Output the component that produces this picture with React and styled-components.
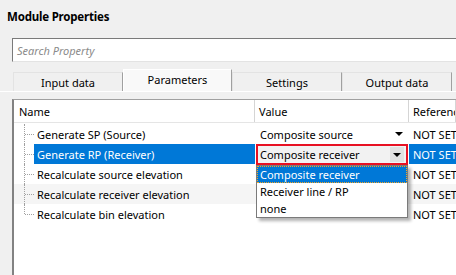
import React from 'react';
import styled, { createGlobalStyle } from 'styled-components';

const Global = createGlobalStyle`
  html, body { margin: 0; padding: 0; background: #f0f0f0; }
  body { font-family: "Noto Sans", "Liberation Sans", sans-serif; font-size: 11px; color: #000; }
`;

const Page = styled.div`
  width: 456px;
  height: 275px;
  overflow: hidden;
  background: #f0f0f0;
`;

const Title = styled.div`
  font-weight: bold;
  font-size: 11.5px;
  line-height: 16px;
  padding: 9px 0 0 7px;
  letter-spacing: -0.2px;
`;

const Search = styled.div`
  margin: 13px 0 0 12px;
  height: 22px;
  background: #fff;
  border-top: 1px solid #7a7a7a;
  border-left: 1px solid #7a7a7a;
  border-bottom: 1px solid #e3e3e3;
  display: flex;
  align-items: center;
  padding-left: 4px;
  color: #8a8a8a;
  font-style: italic;
`;

const TabBar = styled.div`
  display: flex;
  align-items: flex-end;
  margin: 7px 0 0 13px;
  height: 22px;
`;

const Tab = styled.div`
  width: ${p => (p.$active ? 109 : 110)}px;
  height: ${p => (p.$active ? 22 : 19)}px;
  box-sizing: border-box;
  display: flex;
  align-items: center;
  justify-content: center;
  background: ${p => (p.$active ? '#f9f9f9' : '#f0f0f0')};
  border-top: 1px solid ${p => (p.$active ? '#fff' : '#e3e3e3')};
  border-left: 1px solid ${p => (p.$active ? '#fff' : '#e3e3e3')};
  border-right: 1px solid #a0a0a0;
  padding-bottom: ${p => (p.$active ? 3 : 0)}px;
`;

const Pane = styled.div`
  border-top: 1px solid #fff;
  padding: 7px 0 0 12px;
`;

const Table = styled.div`
  position: relative;
  background: #fff;
  border-top: 1px solid #a0a0a0;
  border-left: 2px solid #828282;
  height: 200px;
`;

const Row = styled.div`
  display: grid;
  grid-template-columns: 241px 154px 1fr;
  height: ${p => (p.$header ? 23 : 20)}px;
  background: ${p => (p.$alt ? '#f5f5f5' : 'transparent')};
  ${p => p.$header && 'border-bottom: 1px solid #e5e5e5; box-sizing: border-box; margin-bottom: 1px;'}
`;

const HeadCell = styled.div`
  display: flex;
  align-items: center;
  padding-left: ${p => p.$pad || 4}px;
  border-right: 1px solid #d5d5d5;
  white-space: nowrap;
  overflow: hidden;
`;

const NameCell = styled.div`
  display: flex;
  height: 20px;
  white-space: nowrap;
  overflow: hidden;
`;

const Guide = styled.div`
  position: relative;
  width: 20px;
  flex: none;
  &::before {
    content: '';
    position: absolute;
    left: 10px;
    top: 0;
    height: ${p => (p.$last ? 10 : 20)}px;
    border-left: 1px dotted #a0a0a0;
  }
  &::after {
    content: '';
    position: absolute;
    left: 11px;
    top: 10px;
    width: 9px;
    border-top: 1px dotted #a0a0a0;
  }
`;

const Label = styled.div`
  flex: 1;
  display: flex;
  align-items: center;
  padding-left: 3px;
  background: ${p => (p.$sel ? '#0078d7' : 'transparent')};
  color: ${p => (p.$sel ? '#fff' : '#000')};
`;

const ValueCell = styled.div`
  position: relative;
  display: flex;
  align-items: center;
  padding: 0 6px 0 5px;
  justify-content: space-between;
`;

const RefCell = styled.div`
  display: flex;
  align-items: center;
  padding-left: 4px;
  white-space: nowrap;
  overflow: hidden;
  background: ${p => (p.$sel ? '#0078d7' : 'transparent')};
  color: ${p => (p.$sel ? '#fff' : '#000')};
`;

const Arrow = styled.span`
  width: 0;
  height: 0;
  border-left: 4px solid transparent;
  border-right: 4px solid transparent;
  border-top: 4px solid #000;
`;

const Combo = styled.div`
  position: absolute;
  left: 1px;
  top: 0;
  width: 152px;
  height: 21px;
  box-sizing: border-box;
  border: 2px solid #e81123;
  background: #f2f2f2;
  display: flex;
  align-items: center;
  justify-content: space-between;
  padding-left: 2px;
  z-index: 2;
`;

const ComboButton = styled.div`
  width: 14px;
  height: 15px;
  margin-right: 2px;
  background: #e1e1e1;
  display: flex;
  align-items: center;
  justify-content: center;
`;

const List = styled.div`
  position: absolute;
  left: 1px;
  top: 21px;
  width: 152px;
  box-sizing: border-box;
  background: #fff;
  border: 1px solid #7a7a7a;
  box-shadow: 3px 3px 3px rgba(0, 0, 0, 0.3);
  z-index: 3;
`;

const Item = styled.div`
  height: 17px;
  display: flex;
  align-items: center;
  padding-left: 3px;
  box-sizing: border-box;
  background: ${p => (p.$sel ? '#0078d7' : 'transparent')};
  color: ${p => (p.$sel ? '#fff' : '#000')};
  ${p => p.$sel && 'outline: 1px dotted #f5a623; outline-offset: -1px;'}
`;

const rows = [
  { name: 'Generate SP (Source)', value: 'Composite source' },
  { name: 'Generate RP (Receiver)', combo: true, sel: true },
  { name: 'Recalculate source elevation' },
  { name: 'Recalculate receiver elevation', alt: true },
  { name: 'Recalculate bin elevation', last: true },
];

export default function App() {
  return (
    <Page>
      <Global />
      <Title>Module Properties</Title>
      <Search>Search Property</Search>
      <TabBar>
        <Tab>Input data</Tab>
        <Tab $active>Parameters</Tab>
        <Tab>Settings</Tab>
        <Tab>Output data</Tab>
      </TabBar>
      <Pane>
        <Table>
          <Row $header>
            <HeadCell $pad={5}>Name</HeadCell>
            <HeadCell>Value</HeadCell>
            <HeadCell>Reference</HeadCell>
          </Row>
          {rows.map((r, i) => (
            <Row key={i} $alt={r.alt}>
              <NameCell>
                <Guide $last={r.last} />
                <Label $sel={r.sel}>{r.name}</Label>
              </NameCell>
              <ValueCell>
                {r.value && (
                  <>
                    <span>{r.value}</span>
                    <Arrow />
                  </>
                )}
                {r.combo && (
                  <>
                    <Combo>
                      <span>Composite receiver</span>
                      <ComboButton><Arrow /></ComboButton>
                    </Combo>
                    <List>
                      <Item $sel>Composite receiver</Item>
                      <Item>Receiver line / RP</Item>
                      <Item>none</Item>
                    </List>
                  </>
                )}
              </ValueCell>
              <RefCell $sel={r.sel}>NOT SET</RefCell>
            </Row>
          ))}
        </Table>
      </Pane>
    </Page>
  );
}
